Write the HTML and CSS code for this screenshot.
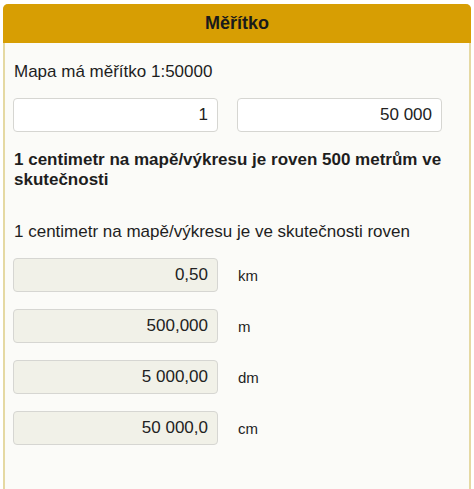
FILE: index.html
```html
<!DOCTYPE html>
<html lang="cs">
<head>
<meta charset="utf-8">
<title>Měřítko</title>
<link rel="stylesheet" href="styles.css">
</head>
<body>
<div class="card">
  <div class="card-header">Měřítko</div>
  <div class="card-body">
    <p class="intro">Mapa má měřítko 1:50000</p>
    <div class="ratio-row">
      <input class="field" type="text" value="1">
      <input class="field" type="text" value="50 000">
    </div>
    <p class="result">1 centimetr na mapě/výkresu je roven 500 metrům ve skutečnosti</p>
    <p class="lead">1 centimetr na mapě/výkresu je ve skutečnosti roven</p>
    <div class="units">
      <div class="unit-row"><input class="field readonly" type="text" value="0,50" readonly><span class="unit">km</span></div>
      <div class="unit-row"><input class="field readonly" type="text" value="500,000" readonly><span class="unit">m</span></div>
      <div class="unit-row"><input class="field readonly" type="text" value="5 000,00" readonly><span class="unit">dm</span></div>
      <div class="unit-row"><input class="field readonly" type="text" value="50 000,0" readonly><span class="unit">cm</span></div>
    </div>
  </div>
</div>
</body>
</html>
```
FILE: styles.css
```css
html, body {
  margin: 0;
  padding: 0;
  background: #ffffff;
}
body {
  font-family: "Liberation Sans", Arial, sans-serif;
  color: #1e1e1e;
  padding: 4px 3px 0 3px;
  box-sizing: border-box;
  height: 100vh;
  overflow: hidden;
}
.card {
  box-sizing: border-box;
  border: 2px solid #e5d9a3;
  border-top: none;
  border-bottom: none;
  border-radius: 5px 5px 0 0;
  background: #fbfbf8;
  height: 100%;
}
.card-header {
  background: #d79e03;
  height: 39px;
  line-height: 39px;
  text-align: center;
  font-weight: bold;
  font-size: 18px;
  color: #1a1a1a;
  border-radius: 5px 5px 0 0;
  margin: 0 -2px;
}
.card-body {
  padding: 20px 27px 0 8px;
}
p {
  margin: 0;
}
.intro {
  font-size: 17px;
  line-height: 18px;
  margin-left: 1px;
}
.ratio-row {
  display: flex;
  gap: 19px;
  margin-top: 17px;
}
.field {
  box-sizing: border-box;
  width: 205px;
  height: 34px;
  border: 1px solid #d6d6d2;
  border-radius: 4px;
  background: #ffffff;
  font-family: "Liberation Sans", Arial, sans-serif;
  font-size: 17px;
  color: #222;
  text-align: right;
  padding: 0 9px 0 6px;
  margin: 0;
  outline: none;
}
.field.readonly {
  background: #f1f1e8;
}
.result {
  margin-top: 18px;
  font-weight: bold;
  font-size: 17px;
  line-height: 20px;
  margin-left: 1px;
}
.lead {
  margin-top: 33px;
  font-size: 17px;
  line-height: 18px;
  margin-left: 1px;
}
.units {
  display: flex;
  flex-direction: column;
  gap: 17px;
  margin-top: 17px;
}
.unit-row {
  display: flex;
  align-items: center;
  gap: 20px;
}
.unit {
  font-size: 15px;
  color: #1e1e1e;
}
```
